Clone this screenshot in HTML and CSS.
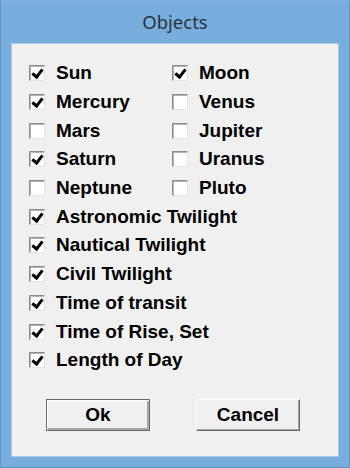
FILE: index.html
```html
<!DOCTYPE html>
<html lang="en">
<head>
    <meta charset="UTF-8">
    <title>Objects</title>
    <link rel="stylesheet" href="styles.css">
</head>
<body>
    <div class="window">
        <div class="title">Objects</div>
        <div class="client">
            <div class="planets">
                <label class="row"><span class="box checked"></span>Sun</label>
                <label class="row"><span class="box checked"></span>Moon</label>
                <label class="row"><span class="box checked"></span>Mercury</label>
                <label class="row"><span class="box"></span>Venus</label>
                <label class="row"><span class="box"></span>Mars</label>
                <label class="row"><span class="box"></span>Jupiter</label>
                <label class="row"><span class="box checked"></span>Saturn</label>
                <label class="row"><span class="box"></span>Uranus</label>
                <label class="row"><span class="box"></span>Neptune</label>
                <label class="row"><span class="box"></span>Pluto</label>
            </div>
            <div class="options">
                <label class="row"><span class="box checked"></span>Astronomic Twilight</label>
                <label class="row"><span class="box checked"></span>Nautical Twilight</label>
                <label class="row"><span class="box checked"></span>Civil Twilight</label>
                <label class="row"><span class="box checked"></span>Time of transit</label>
                <label class="row"><span class="box checked"></span>Time of Rise, Set</label>
                <label class="row"><span class="box checked"></span>Length of Day</label>
            </div>
            <div class="buttons">
                <button class="button default">Ok</button>
                <button class="button">Cancel</button>
            </div>
        </div>
    </div>
</body>
</html>
```

FILE: styles.css
```css
body {
    margin: 0;
    padding: 0;
    background-color: #78aede;
}
.window {
    width: 350px;
    height: 468px;
    box-sizing: border-box;
    background-color: #78aede;
    border: 1px solid #5f93c6;
    border-top-color: #7fb3e2;
    display: flex;
    flex-direction: column;
}
.title {
    height: 42px;
    line-height: 42px;
    text-align: center;
    font-family: "Noto Sans", "Open Sans", sans-serif;
    font-size: 18.5px;
    color: #2a323c;
}
.client {
    margin: 0 10px 10px 10px;
    flex: 1;
    background-color: #f0f0f0;
    border: 1px solid #a9c8e6;
    padding: 15px 0 0 17px;
    font-family: "Liberation Sans", Arial, sans-serif;
    font-weight: bold;
    font-size: 19px;
    color: #000;
}
.planets {
    display: grid;
    grid-template-columns: 143px 1fr;
}
.row {
    display: flex;
    align-items: center;
    height: 28.7px;
    white-space: nowrap;
}
.box {
    width: 16px;
    height: 16px;
    box-sizing: border-box;
    background-color: #fff;
    border: 1px solid;
    border-color: #8c8c8c #e2e2e2 #e2e2e2 #8c8c8c;
    box-shadow: inset 1px 1px 0 #b4b4b4;
    margin-right: 11px;
    flex-shrink: 0;
    position: relative;
}
.box.checked::after {
    content: "";
    position: absolute;
    left: 4px;
    top: 1px;
    width: 4px;
    height: 8px;
    border-right: 3px solid #000;
    border-bottom: 3px solid #000;
    transform: rotate(38deg);
}
.buttons {
    display: flex;
    gap: 46px;
    padding: 24px 0 0 17px;
}
.button {
    width: 104px;
    height: 32px;
    background-color: #f0f0f0;
    font-family: "Liberation Sans", Arial, sans-serif;
    font-weight: bold;
    font-size: 19px;
    color: #000;
    padding: 0;
    border: 1px solid;
    border-color: #ffffff #6a6a6a #6a6a6a #ffffff;
    box-shadow: inset -1px -1px 0 #a6a6a6;
}
.button.default {
    border-color: #6a6a6a;
    box-shadow: inset 1px 1px 0 #fff, inset -2px -2px 0 #a6a6a6;
}
```
